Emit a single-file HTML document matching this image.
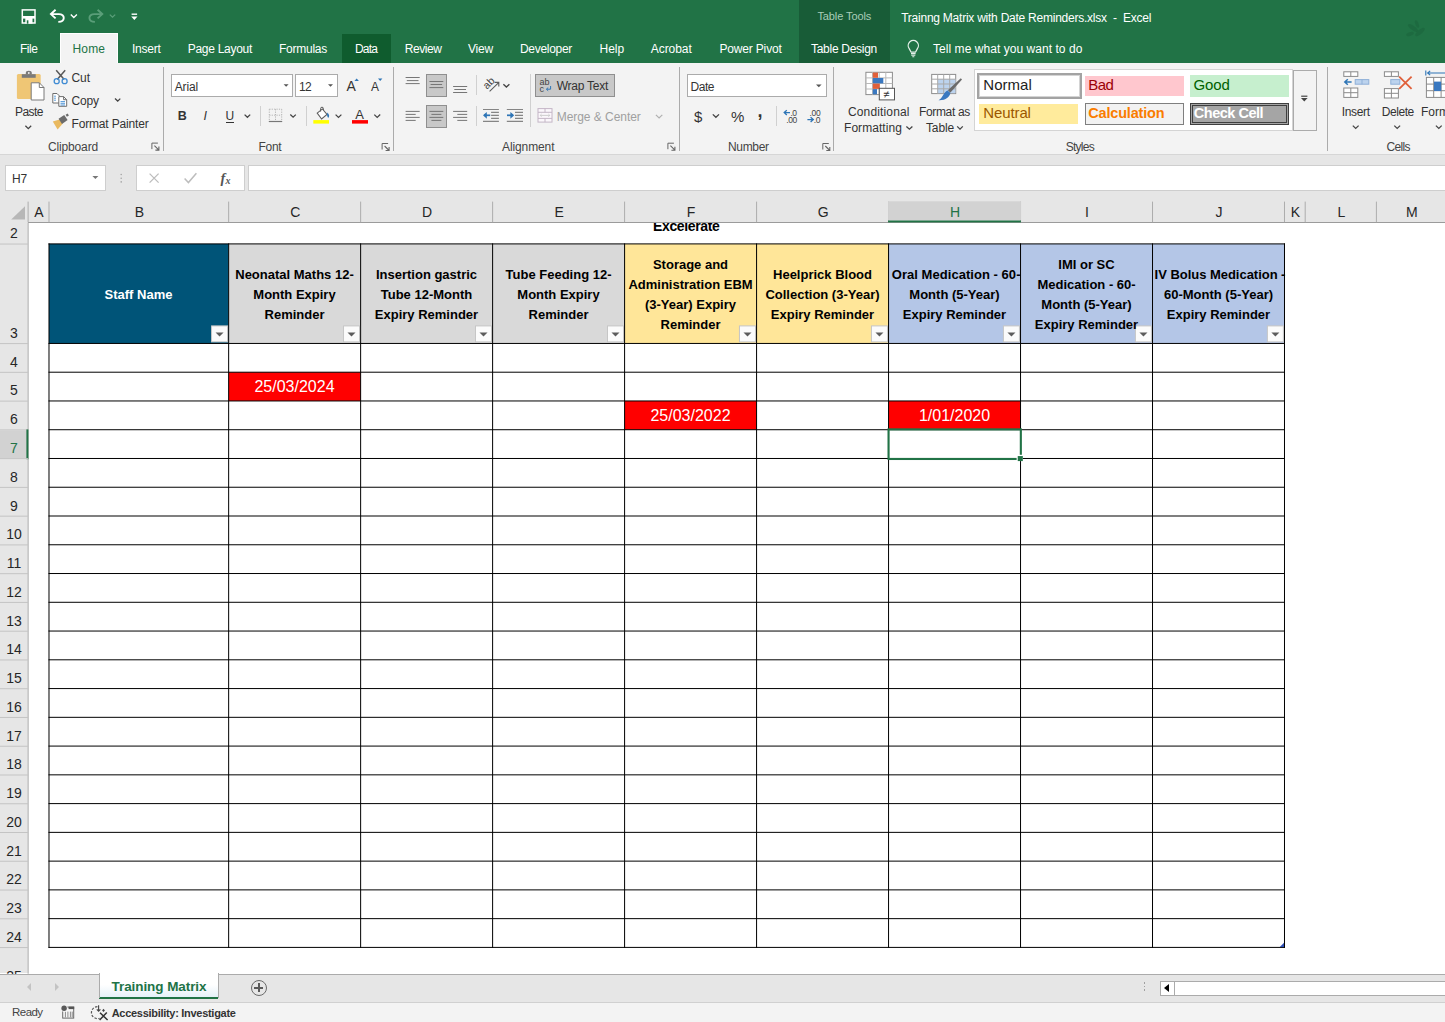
<!DOCTYPE html>
<html><head><meta charset="utf-8"><title>Trainng Matrix with Date Reminders.xlsx - Excel</title>
<style>
html,body{margin:0;padding:0;}
body{width:1445px;height:1022px;overflow:hidden;position:relative;background:#fff;font-family:'Liberation Sans', sans-serif;}
body>div,body>svg{position:absolute;}
</style></head><body>
<div style="left:0px;top:0px;width:1445px;height:63px;background:#217346;"></div>
<div style="left:799px;top:0px;width:91px;height:63px;background:#185c37;"></div>
<div style="left:342px;top:34px;width:49px;height:29px;background:#0f5c2e;"></div>
<div style="left:60px;top:33px;width:58px;height:31px;background:#f3f3f3;border:1px solid #fff;border-bottom:none;box-sizing:border-box;"></div>
<div style="left:0px;top:63px;width:60px;height:1px;background:#fbfbfb;"></div>
<div style="left:118px;top:63px;width:1327px;height:1px;background:#fbfbfb;"></div>
<div style="top:37.1px;height:24px;line-height:24px;font-size:12px;color:#ffffff;white-space:pre;left:20.0px;letter-spacing:-0.48px;">File</div>
<div style="top:37.1px;height:24px;line-height:24px;font-size:12px;color:#217346;white-space:pre;left:72.5px;letter-spacing:0.17px;">Home</div>
<div style="top:37.1px;height:24px;line-height:24px;font-size:12px;color:#ffffff;white-space:pre;left:132.0px;letter-spacing:-0.25px;">Insert</div>
<div style="top:37.1px;height:24px;line-height:24px;font-size:12px;color:#ffffff;white-space:pre;left:187.7px;letter-spacing:-0.28px;">Page Layout</div>
<div style="top:37.1px;height:24px;line-height:24px;font-size:12px;color:#ffffff;white-space:pre;left:279.0px;letter-spacing:-0.25px;">Formulas</div>
<div style="top:37.1px;height:24px;line-height:24px;font-size:12px;color:#ffffff;white-space:pre;left:355.0px;letter-spacing:-0.84px;">Data</div>
<div style="top:37.1px;height:24px;line-height:24px;font-size:12px;color:#ffffff;white-space:pre;left:404.7px;letter-spacing:-0.42px;">Review</div>
<div style="top:37.1px;height:24px;line-height:24px;font-size:12px;color:#ffffff;white-space:pre;left:468.0px;letter-spacing:-0.20px;">View</div>
<div style="top:37.1px;height:24px;line-height:24px;font-size:12px;color:#ffffff;white-space:pre;left:520.0px;letter-spacing:-0.30px;">Developer</div>
<div style="top:37.1px;height:24px;line-height:24px;font-size:12px;color:#ffffff;white-space:pre;left:599.5px;letter-spacing:-0.04px;">Help</div>
<div style="top:37.1px;height:24px;line-height:24px;font-size:12px;color:#ffffff;white-space:pre;left:650.8px;letter-spacing:-0.07px;">Acrobat</div>
<div style="top:37.1px;height:24px;line-height:24px;font-size:12px;color:#ffffff;white-space:pre;left:719.4px;letter-spacing:-0.16px;">Power Pivot</div>
<div style="top:37.1px;height:24px;line-height:24px;font-size:12px;color:#ffffff;white-space:pre;left:811.0px;letter-spacing:-0.28px;">Table Design</div>
<div style="top:37.1px;height:24px;line-height:24px;font-size:12px;color:#ffffff;white-space:pre;left:933.0px;letter-spacing:0.05px;">Tell me what you want to do</div>
<div style="top:4.7px;height:22px;line-height:22px;font-size:11px;color:#a9cdb8;white-space:pre;left:817.4px;letter-spacing:-0.09px;">Table Tools</div>
<div style="top:6.2px;height:24px;line-height:24px;font-size:12px;color:#ffffff;white-space:pre;left:901.2px;letter-spacing:-0.24px;">Trainng Matrix with Date Reminders.xlsx  -  Excel</div>
<div style="left:0px;top:63px;width:1445px;height:91px;background:#f3f3f3;"></div>
<div style="left:0px;top:154px;width:1445px;height:1px;background:#d6d6d6;"></div>
<div style="left:0px;top:155px;width:1445px;height:46px;background:#e6e6e6;"></div>
<div style="left:163px;top:67px;width:1px;height:84px;background:#ababab;"></div>
<div style="left:393px;top:67px;width:1px;height:84px;background:#ababab;"></div>
<div style="left:679px;top:67px;width:1px;height:84px;background:#ababab;"></div>
<div style="left:833px;top:67px;width:1px;height:84px;background:#ababab;"></div>
<div style="left:1327px;top:67px;width:1px;height:84px;background:#ababab;"></div>
<div style="top:135.1px;height:24px;line-height:24px;font-size:12px;color:#444444;white-space:pre;left:48.0px;letter-spacing:-0.15px;">Clipboard</div>
<div style="top:135.1px;height:24px;line-height:24px;font-size:12px;color:#444444;white-space:pre;left:258.5px;letter-spacing:-0.28px;">Font</div>
<div style="top:135.1px;height:24px;line-height:24px;font-size:12px;color:#444444;white-space:pre;left:502.0px;letter-spacing:-0.11px;">Alignment</div>
<div style="top:135.1px;height:24px;line-height:24px;font-size:12px;color:#444444;white-space:pre;left:728.0px;letter-spacing:-0.33px;">Number</div>
<div style="top:135.1px;height:24px;line-height:24px;font-size:12px;color:#444444;white-space:pre;left:1065.7px;letter-spacing:-0.73px;">Styles</div>
<div style="top:135.1px;height:24px;line-height:24px;font-size:12px;color:#444444;white-space:pre;left:1386.4px;letter-spacing:-0.67px;">Cells</div>
<div style="top:100.2px;height:24px;line-height:24px;font-size:12px;color:#333333;white-space:pre;left:15.0px;letter-spacing:-0.54px;">Paste</div>
<div style="top:66.2px;height:24px;line-height:24px;font-size:12px;color:#333333;white-space:pre;left:71.5px;letter-spacing:-0.06px;">Cut</div>
<div style="top:89.4px;height:24px;line-height:24px;font-size:12px;color:#333333;white-space:pre;left:71.5px;letter-spacing:-0.13px;">Copy</div>
<div style="top:112.2px;height:24px;line-height:24px;font-size:12px;color:#333333;white-space:pre;left:71.5px;letter-spacing:-0.16px;">Format Painter</div>
<div style="left:171px;top:74px;width:122px;height:22.5px;background:#fff;border:1px solid #ababab;box-sizing:border-box;"></div>
<div style="left:295px;top:74px;width:43px;height:22.5px;background:#fff;border:1px solid #ababab;box-sizing:border-box;"></div>
<div style="top:74.7px;height:24px;line-height:24px;font-size:12px;color:#333333;white-space:pre;left:174.7px;letter-spacing:-0.14px;">Arial</div>
<div style="top:74.7px;height:24px;line-height:24px;font-size:12px;color:#333333;white-space:pre;left:299.0px;letter-spacing:-0.67px;">12</div>
<div style="top:103.5px;height:25px;line-height:25px;font-size:12.5px;color:#333333;white-space:pre;font-weight:bold;left:177.7px;letter-spacing:-1.20px;">B</div>
<div style="top:103.5px;height:25px;line-height:25px;font-size:12.5px;color:#333333;white-space:pre;font-style:italic;left:203.5px;letter-spacing:0.53px;">I</div>
<div style="top:103.7px;height:24px;line-height:24px;font-size:12px;color:#333333;white-space:pre;left:225.5px;letter-spacing:-0.37px;">U</div>
<div style="left:225.5px;top:121.5px;width:8.5px;height:1px;background:#333333;"></div>
<div style="top:101.7px;height:26px;line-height:26px;font-size:13px;color:#333333;white-space:pre;left:355.2px;letter-spacing:0.83px;">A</div>
<div style="top:72.2px;height:28px;line-height:28px;font-size:14px;color:#333333;white-space:pre;left:346.5px;letter-spacing:0.16px;">A</div>
<div style="top:75.2px;height:24px;line-height:24px;font-size:12px;color:#333333;white-space:pre;left:371.0px;letter-spacing:-0.00px;">A</div>
<div style="left:426px;top:74px;width:21px;height:23px;background:#c8c8c8;border:1px solid #8f8f8f;box-sizing:border-box;"></div>
<div style="left:426px;top:105px;width:21px;height:23px;background:#c8c8c8;border:1px solid #8f8f8f;box-sizing:border-box;"></div>
<div style="left:260px;top:106px;width:1px;height:20px;background:#d0d0d0;"></div>
<div style="left:305.5px;top:106px;width:1px;height:20px;background:#d0d0d0;"></div>
<div style="left:475.5px;top:106px;width:1px;height:20px;background:#d0d0d0;"></div>
<div style="left:776px;top:106px;width:1px;height:20px;background:#d0d0d0;"></div>
<div style="left:475.5px;top:75px;width:1px;height:20px;background:#d0d0d0;"></div>
<div style="left:530px;top:74px;width:1px;height:53px;background:#d0d0d0;"></div>
<div style="left:535px;top:74px;width:80px;height:23px;background:#c8c8c8;border:1px solid #8f8f8f;box-sizing:border-box;"></div>
<div style="top:74.4px;height:24px;line-height:24px;font-size:12px;color:#333333;white-space:pre;left:556.7px;letter-spacing:-0.25px;">Wrap Text</div>
<div style="top:105.0px;height:24px;line-height:24px;font-size:12px;color:#a0a0a0;white-space:pre;left:556.7px;letter-spacing:-0.04px;">Merge &amp; Center</div>
<div style="left:687px;top:74px;width:139.5px;height:22.5px;background:#fff;border:1px solid #ababab;box-sizing:border-box;"></div>
<div style="top:74.7px;height:24px;line-height:24px;font-size:12px;color:#333333;white-space:pre;left:690.6px;letter-spacing:-0.51px;">Date</div>
<div style="top:101.7px;height:30px;line-height:30px;font-size:15px;color:#333333;white-space:pre;left:694.0px;letter-spacing:0.66px;">$</div>
<div style="top:101.7px;height:30px;line-height:30px;font-size:15px;color:#333333;white-space:pre;left:731.0px;letter-spacing:-0.54px;">%</div>
<div style="top:93.3px;height:36px;line-height:36px;font-size:18px;color:#333333;white-space:pre;font-weight:bold;left:757.5px;letter-spacing:0.50px;">,</div>
<div style="top:99.9px;height:24px;line-height:24px;font-size:12px;color:#333333;white-space:pre;left:848.0px;letter-spacing:0.14px;">Conditional</div>
<div style="top:115.9px;height:24px;line-height:24px;font-size:12px;color:#333333;white-space:pre;left:844.0px;letter-spacing:0.06px;">Formatting</div>
<div style="top:99.9px;height:24px;line-height:24px;font-size:12px;color:#333333;white-space:pre;left:918.9px;letter-spacing:-0.32px;">Format as</div>
<div style="top:115.9px;height:24px;line-height:24px;font-size:12px;color:#333333;white-space:pre;left:926.0px;letter-spacing:-0.14px;">Table</div>
<div style="left:974px;top:69px;width:319px;height:62px;background:#fff;border:1px solid #d4d4d4;box-sizing:border-box;"></div>
<div style="left:976.5px;top:72.5px;width:105px;height:26.5px;background:#fff;border:2px solid #a3a3a3;box-shadow:inset 0 0 0 1px #d4d4d4;box-sizing:border-box;"></div>
<div style="top:70.4px;height:30px;line-height:30px;font-size:15px;color:#222;white-space:pre;left:983.3px;letter-spacing:0.03px;">Normal</div>
<div style="left:1084.7px;top:75.7px;width:99px;height:20.6px;background:#ffc7ce;"></div>
<div style="top:70.4px;height:30px;line-height:30px;font-size:15px;color:#9c0006;white-space:pre;left:1088.3px;letter-spacing:-0.60px;">Bad</div>
<div style="left:1189.6px;top:75px;width:99px;height:21.5px;background:#c6efce;"></div>
<div style="top:70.4px;height:30px;line-height:30px;font-size:15px;color:#006100;white-space:pre;left:1193.4px;letter-spacing:-0.10px;">Good</div>
<div style="left:979.3px;top:103.7px;width:99px;height:20.3px;background:#ffeb9c;"></div>
<div style="top:98.3px;height:30px;line-height:30px;font-size:15px;color:#9c5700;white-space:pre;left:983.3px;letter-spacing:-0.12px;">Neutral</div>
<div style="left:1084.7px;top:103px;width:99px;height:21.6px;background:#f2f2f2;border:1px solid #7f7f7f;box-sizing:border-box;"></div>
<div style="top:98.8px;height:29px;line-height:29px;font-size:14.5px;color:#fa7d00;white-space:pre;font-weight:bold;left:1088.3px;letter-spacing:-0.19px;">Calculation</div>
<div style="left:1189.6px;top:103.2px;width:99px;height:21.4px;background:#a5a5a5;border:3px double #3f3f3f;box-sizing:border-box;"></div>
<div style="top:98.8px;height:29px;line-height:29px;font-size:14.5px;color:#fff;white-space:pre;font-weight:bold;left:1193.8px;letter-spacing:-0.49px;">Check Cell</div>
<div style="left:1293px;top:69.5px;width:23.5px;height:61px;background:#f3f3f3;border:1px solid #ababab;box-sizing:border-box;"></div>
<div style="top:99.9px;height:24px;line-height:24px;font-size:12px;color:#333333;white-space:pre;left:1341.8px;letter-spacing:-0.34px;">Insert</div>
<div style="top:99.9px;height:24px;line-height:24px;font-size:12px;color:#333333;white-space:pre;left:1381.7px;letter-spacing:-0.43px;">Delete</div>
<div style="top:99.9px;height:24px;line-height:24px;font-size:12px;color:#333333;white-space:pre;left:1421.0px;letter-spacing:-0.00px;">Format</div>
<div style="left:5px;top:165px;width:101px;height:26px;background:#fff;border:1px solid #cecece;box-sizing:border-box;"></div>
<div style="left:136px;top:165px;width:109px;height:26px;background:#fff;border:1px solid #cecece;box-sizing:border-box;"></div>
<div style="left:248px;top:165px;width:1200px;height:26px;background:#fff;border:1px solid #cecece;box-sizing:border-box;"></div>
<div style="top:167.2px;height:24px;line-height:24px;font-size:12px;color:#333333;white-space:pre;left:12.0px;letter-spacing:-0.17px;">H7</div>
<div style="left:0px;top:201px;width:1445px;height:772px;background:#fff;"></div>
<div style="top:212.0px;height:28px;line-height:28px;font-size:14px;color:#000;white-space:pre;font-weight:bold;left:653.0px;letter-spacing:-0.35px;">Excelerate</div>
<div style="left:0px;top:201px;width:1445px;height:21px;background:#e6e6e6;"></div>
<div style="left:0px;top:222px;width:1445px;height:1px;background:#9b9b9b;"></div>
<div style="left:0px;top:222px;width:28px;height:751px;background:#e6e6e6;"></div>
<svg width="1445" height="780" viewBox="0 200 1445 780" style="left:0;top:200px"><rect x="27.60" y="201.60" width="1.00" height="20.60" fill="#adadad"/><rect x="48.49" y="201.60" width="1.00" height="20.60" fill="#adadad"/><rect x="228.15" y="201.60" width="1.00" height="20.60" fill="#adadad"/><rect x="360.13" y="201.60" width="1.00" height="20.60" fill="#adadad"/><rect x="492.11" y="201.60" width="1.00" height="20.60" fill="#adadad"/><rect x="624.09" y="201.60" width="1.00" height="20.60" fill="#adadad"/><rect x="756.07" y="201.60" width="1.00" height="20.60" fill="#adadad"/><rect x="888.05" y="201.60" width="1.00" height="20.60" fill="#adadad"/><rect x="1020.03" y="201.60" width="1.00" height="20.60" fill="#adadad"/><rect x="1152.01" y="201.60" width="1.00" height="20.60" fill="#adadad"/><rect x="1283.99" y="201.60" width="1.00" height="20.60" fill="#adadad"/><rect x="1304.70" y="201.60" width="1.00" height="20.60" fill="#adadad"/><rect x="1375.90" y="201.60" width="1.00" height="20.60" fill="#adadad"/><rect x="888.05" y="201.30" width="132.88" height="19.20" fill="#d2d2d2"/><rect x="888.05" y="220.50" width="132.88" height="1.90" fill="#217346"/><rect x="27.50" y="222.70" width="1.30" height="751.00" fill="#bcbcbc"/><rect x="0.00" y="243.55" width="28.10" height="1.00" fill="#c4c4c4"/><rect x="0.00" y="343.09" width="28.10" height="1.00" fill="#c4c4c4"/><rect x="0.00" y="371.85" width="28.10" height="1.00" fill="#c4c4c4"/><rect x="0.00" y="400.61" width="28.10" height="1.00" fill="#c4c4c4"/><rect x="0.00" y="429.37" width="28.10" height="1.00" fill="#c4c4c4"/><rect x="0.00" y="430.32" width="27.60" height="28.16" fill="#d2d2d2"/><rect x="26.40" y="429.42" width="2.00" height="29.76" fill="#217346"/><rect x="0.00" y="458.13" width="28.10" height="1.00" fill="#c4c4c4"/><rect x="0.00" y="486.89" width="28.10" height="1.00" fill="#c4c4c4"/><rect x="0.00" y="515.65" width="28.10" height="1.00" fill="#c4c4c4"/><rect x="0.00" y="544.41" width="28.10" height="1.00" fill="#c4c4c4"/><rect x="0.00" y="573.17" width="28.10" height="1.00" fill="#c4c4c4"/><rect x="0.00" y="601.93" width="28.10" height="1.00" fill="#c4c4c4"/><rect x="0.00" y="630.69" width="28.10" height="1.00" fill="#c4c4c4"/><rect x="0.00" y="659.45" width="28.10" height="1.00" fill="#c4c4c4"/><rect x="0.00" y="688.21" width="28.10" height="1.00" fill="#c4c4c4"/><rect x="0.00" y="716.97" width="28.10" height="1.00" fill="#c4c4c4"/><rect x="0.00" y="745.73" width="28.10" height="1.00" fill="#c4c4c4"/><rect x="0.00" y="774.49" width="28.10" height="1.00" fill="#c4c4c4"/><rect x="0.00" y="803.25" width="28.10" height="1.00" fill="#c4c4c4"/><rect x="0.00" y="832.01" width="28.10" height="1.00" fill="#c4c4c4"/><rect x="0.00" y="860.77" width="28.10" height="1.00" fill="#c4c4c4"/><rect x="0.00" y="889.53" width="28.10" height="1.00" fill="#c4c4c4"/><rect x="0.00" y="918.29" width="28.10" height="1.00" fill="#c4c4c4"/><rect x="0.00" y="947.05" width="28.10" height="1.00" fill="#c4c4c4"/><rect x="48.99" y="243.90" width="179.66" height="99.54" fill="#005478"/><rect x="228.65" y="243.90" width="131.98" height="99.54" fill="#d9d9d9"/><rect x="360.63" y="243.90" width="131.98" height="99.54" fill="#d9d9d9"/><rect x="492.61" y="243.90" width="131.98" height="99.54" fill="#d9d9d9"/><rect x="624.59" y="243.90" width="131.98" height="99.54" fill="#ffe699"/><rect x="756.57" y="243.90" width="131.98" height="99.54" fill="#ffe699"/><rect x="888.55" y="243.90" width="131.98" height="99.54" fill="#b4c6e7"/><rect x="1020.53" y="243.90" width="131.98" height="99.54" fill="#b4c6e7"/><rect x="1152.51" y="243.90" width="131.98" height="99.54" fill="#b4c6e7"/><rect x="228.65" y="372.20" width="131.98" height="28.76" fill="#ff0000"/><rect x="624.59" y="400.96" width="131.98" height="28.76" fill="#ff0000"/><rect x="888.55" y="400.96" width="131.98" height="28.76" fill="#ff0000"/><rect x="48.49" y="243.40" width="1236.50" height="1.00" fill="#000"/><rect x="48.49" y="342.94" width="1236.50" height="1.00" fill="#000"/><rect x="48.49" y="371.70" width="1236.50" height="1.00" fill="#000"/><rect x="48.49" y="400.46" width="1236.50" height="1.00" fill="#000"/><rect x="48.49" y="429.22" width="1236.50" height="1.00" fill="#000"/><rect x="48.49" y="457.98" width="1236.50" height="1.00" fill="#000"/><rect x="48.49" y="486.74" width="1236.50" height="1.00" fill="#000"/><rect x="48.49" y="515.50" width="1236.50" height="1.00" fill="#000"/><rect x="48.49" y="544.26" width="1236.50" height="1.00" fill="#000"/><rect x="48.49" y="573.02" width="1236.50" height="1.00" fill="#000"/><rect x="48.49" y="601.78" width="1236.50" height="1.00" fill="#000"/><rect x="48.49" y="630.54" width="1236.50" height="1.00" fill="#000"/><rect x="48.49" y="659.30" width="1236.50" height="1.00" fill="#000"/><rect x="48.49" y="688.06" width="1236.50" height="1.00" fill="#000"/><rect x="48.49" y="716.82" width="1236.50" height="1.00" fill="#000"/><rect x="48.49" y="745.58" width="1236.50" height="1.00" fill="#000"/><rect x="48.49" y="774.34" width="1236.50" height="1.00" fill="#000"/><rect x="48.49" y="803.10" width="1236.50" height="1.00" fill="#000"/><rect x="48.49" y="831.86" width="1236.50" height="1.00" fill="#000"/><rect x="48.49" y="860.62" width="1236.50" height="1.00" fill="#000"/><rect x="48.49" y="889.38" width="1236.50" height="1.00" fill="#000"/><rect x="48.49" y="918.14" width="1236.50" height="1.00" fill="#000"/><rect x="48.49" y="946.90" width="1236.50" height="1.00" fill="#000"/><rect x="48.49" y="243.40" width="1.00" height="704.50" fill="#000"/><rect x="228.15" y="243.40" width="1.00" height="704.50" fill="#000"/><rect x="360.13" y="243.40" width="1.00" height="704.50" fill="#000"/><rect x="492.11" y="243.40" width="1.00" height="704.50" fill="#000"/><rect x="624.09" y="243.40" width="1.00" height="704.50" fill="#000"/><rect x="756.07" y="243.40" width="1.00" height="704.50" fill="#000"/><rect x="888.05" y="243.40" width="1.00" height="704.50" fill="#000"/><rect x="1020.03" y="243.40" width="1.00" height="704.50" fill="#000"/><rect x="1152.01" y="243.40" width="1.00" height="704.50" fill="#000"/><rect x="1283.99" y="243.40" width="1.00" height="704.50" fill="#000"/><rect x="211.55" y="325.9" width="16" height="16" fill="#fbfbfb" stroke="#c6c6c6" stroke-width="1"/><path d="M215.55,332.5 h8 l-4,4 Z" fill="#5c5c5c"/><rect x="343.53" y="325.9" width="16" height="16" fill="#fbfbfb" stroke="#c6c6c6" stroke-width="1"/><path d="M347.53,332.5 h8 l-4,4 Z" fill="#5c5c5c"/><rect x="475.51" y="325.9" width="16" height="16" fill="#fbfbfb" stroke="#c6c6c6" stroke-width="1"/><path d="M479.51,332.5 h8 l-4,4 Z" fill="#5c5c5c"/><rect x="607.49" y="325.9" width="16" height="16" fill="#fbfbfb" stroke="#c6c6c6" stroke-width="1"/><path d="M611.49,332.5 h8 l-4,4 Z" fill="#5c5c5c"/><rect x="739.47" y="325.9" width="16" height="16" fill="#fbfbfb" stroke="#c6c6c6" stroke-width="1"/><path d="M743.47,332.5 h8 l-4,4 Z" fill="#5c5c5c"/><rect x="871.45" y="325.9" width="16" height="16" fill="#fbfbfb" stroke="#c6c6c6" stroke-width="1"/><path d="M875.45,332.5 h8 l-4,4 Z" fill="#5c5c5c"/><rect x="1003.43" y="325.9" width="16" height="16" fill="#fbfbfb" stroke="#c6c6c6" stroke-width="1"/><path d="M1007.43,332.5 h8 l-4,4 Z" fill="#5c5c5c"/><rect x="1135.41" y="325.9" width="16" height="16" fill="#fbfbfb" stroke="#c6c6c6" stroke-width="1"/><path d="M1139.41,332.5 h8 l-4,4 Z" fill="#5c5c5c"/><rect x="1267.39" y="325.9" width="16" height="16" fill="#fbfbfb" stroke="#c6c6c6" stroke-width="1"/><path d="M1271.39,332.5 h8 l-4,4 Z" fill="#5c5c5c"/><rect x="888.55" y="429.37" width="132.28" height="29.61" fill="none" stroke="#217346" stroke-width="2.1"/><rect x="1016.63" y="454.78" width="6.20" height="6.30" fill="#fff"/><rect x="1017.73" y="456.08" width="5.10" height="5.00" fill="#217346"/><path d="M1283.99,942.80 V946.90 H1279.79 Z" fill="#2f4fb5"/></svg>
<div style="top:219.2px;height:28px;line-height:28px;font-size:14px;color:#262626;white-space:pre;left:0.0px;width:28.0px;text-align:center;">2</div>
<div style="top:319.2px;height:28px;line-height:28px;font-size:14px;color:#262626;white-space:pre;left:0.0px;width:28.0px;text-align:center;">3</div>
<div style="top:348.2px;height:28px;line-height:28px;font-size:14px;color:#262626;white-space:pre;left:0.0px;width:28.0px;text-align:center;">4</div>
<div style="top:376.2px;height:28px;line-height:28px;font-size:14px;color:#262626;white-space:pre;left:0.0px;width:28.0px;text-align:center;">5</div>
<div style="top:405.2px;height:28px;line-height:28px;font-size:14px;color:#262626;white-space:pre;left:0.0px;width:28.0px;text-align:center;">6</div>
<div style="top:434.2px;height:28px;line-height:28px;font-size:14px;color:#217346;white-space:pre;left:0.0px;width:28.0px;text-align:center;">7</div>
<div style="top:463.2px;height:28px;line-height:28px;font-size:14px;color:#262626;white-space:pre;left:0.0px;width:28.0px;text-align:center;">8</div>
<div style="top:492.2px;height:28px;line-height:28px;font-size:14px;color:#262626;white-space:pre;left:0.0px;width:28.0px;text-align:center;">9</div>
<div style="top:520.2px;height:28px;line-height:28px;font-size:14px;color:#262626;white-space:pre;left:0.0px;width:28.0px;text-align:center;">10</div>
<div style="top:549.2px;height:28px;line-height:28px;font-size:14px;color:#262626;white-space:pre;left:0.0px;width:28.0px;text-align:center;">11</div>
<div style="top:578.2px;height:28px;line-height:28px;font-size:14px;color:#262626;white-space:pre;left:0.0px;width:28.0px;text-align:center;">12</div>
<div style="top:607.2px;height:28px;line-height:28px;font-size:14px;color:#262626;white-space:pre;left:0.0px;width:28.0px;text-align:center;">13</div>
<div style="top:635.2px;height:28px;line-height:28px;font-size:14px;color:#262626;white-space:pre;left:0.0px;width:28.0px;text-align:center;">14</div>
<div style="top:664.2px;height:28px;line-height:28px;font-size:14px;color:#262626;white-space:pre;left:0.0px;width:28.0px;text-align:center;">15</div>
<div style="top:693.2px;height:28px;line-height:28px;font-size:14px;color:#262626;white-space:pre;left:0.0px;width:28.0px;text-align:center;">16</div>
<div style="top:722.2px;height:28px;line-height:28px;font-size:14px;color:#262626;white-space:pre;left:0.0px;width:28.0px;text-align:center;">17</div>
<div style="top:750.2px;height:28px;line-height:28px;font-size:14px;color:#262626;white-space:pre;left:0.0px;width:28.0px;text-align:center;">18</div>
<div style="top:779.2px;height:28px;line-height:28px;font-size:14px;color:#262626;white-space:pre;left:0.0px;width:28.0px;text-align:center;">19</div>
<div style="top:808.2px;height:28px;line-height:28px;font-size:14px;color:#262626;white-space:pre;left:0.0px;width:28.0px;text-align:center;">20</div>
<div style="top:837.2px;height:28px;line-height:28px;font-size:14px;color:#262626;white-space:pre;left:0.0px;width:28.0px;text-align:center;">21</div>
<div style="top:865.2px;height:28px;line-height:28px;font-size:14px;color:#262626;white-space:pre;left:0.0px;width:28.0px;text-align:center;">22</div>
<div style="top:894.2px;height:28px;line-height:28px;font-size:14px;color:#262626;white-space:pre;left:0.0px;width:28.0px;text-align:center;">23</div>
<div style="top:923.2px;height:28px;line-height:28px;font-size:14px;color:#262626;white-space:pre;left:0.0px;width:28.0px;text-align:center;">24</div>
<div style="top:962.0px;height:28px;line-height:28px;font-size:14px;color:#262626;white-space:pre;left:0.0px;width:28.0px;text-align:center;">25</div>
<div style="top:198.3px;height:28px;line-height:28px;font-size:14px;color:#262626;white-space:pre;left:28.6px;width:20.9px;text-align:center;">A</div>
<div style="top:198.3px;height:28px;line-height:28px;font-size:14px;color:#262626;white-space:pre;left:49.5px;width:179.7px;text-align:center;">B</div>
<div style="top:198.3px;height:28px;line-height:28px;font-size:14px;color:#262626;white-space:pre;left:229.2px;width:132.0px;text-align:center;">C</div>
<div style="top:198.3px;height:28px;line-height:28px;font-size:14px;color:#262626;white-space:pre;left:361.1px;width:132.0px;text-align:center;">D</div>
<div style="top:198.3px;height:28px;line-height:28px;font-size:14px;color:#262626;white-space:pre;left:493.1px;width:132.0px;text-align:center;">E</div>
<div style="top:198.3px;height:28px;line-height:28px;font-size:14px;color:#262626;white-space:pre;left:625.1px;width:132.0px;text-align:center;">F</div>
<div style="top:198.3px;height:28px;line-height:28px;font-size:14px;color:#262626;white-space:pre;left:757.1px;width:132.0px;text-align:center;">G</div>
<div style="top:198.3px;height:28px;line-height:28px;font-size:14px;color:#217346;white-space:pre;left:889.0px;width:132.0px;text-align:center;">H</div>
<div style="top:198.3px;height:28px;line-height:28px;font-size:14px;color:#262626;white-space:pre;left:1021.0px;width:132.0px;text-align:center;">I</div>
<div style="top:198.3px;height:28px;line-height:28px;font-size:14px;color:#262626;white-space:pre;left:1153.0px;width:132.0px;text-align:center;">J</div>
<div style="top:198.3px;height:28px;line-height:28px;font-size:14px;color:#262626;white-space:pre;left:1285.0px;width:20.7px;text-align:center;">K</div>
<div style="top:198.3px;height:28px;line-height:28px;font-size:14px;color:#262626;white-space:pre;left:1305.7px;width:71.2px;text-align:center;">L</div>
<div style="top:198.3px;height:28px;line-height:28px;font-size:14px;color:#262626;white-space:pre;left:1376.9px;width:70.1px;text-align:center;">M</div>
<div style="top:281.5px;height:26px;line-height:26px;font-size:13px;color:#fff;white-space:pre;font-weight:bold;left:49.0px;width:179.0px;text-align:center;">Staff Name</div>
<div style="top:261.5px;height:26px;line-height:26px;font-size:13px;color:#000;white-space:pre;font-weight:bold;left:229.0px;width:131.0px;text-align:center;">Neonatal Maths 12-</div>
<div style="top:281.5px;height:26px;line-height:26px;font-size:13px;color:#000;white-space:pre;font-weight:bold;left:229.0px;width:131.0px;text-align:center;">Month Expiry</div>
<div style="top:301.5px;height:26px;line-height:26px;font-size:13px;color:#000;white-space:pre;font-weight:bold;left:229.0px;width:131.0px;text-align:center;">Reminder</div>
<div style="top:261.5px;height:26px;line-height:26px;font-size:13px;color:#000;white-space:pre;font-weight:bold;left:361.0px;width:131.0px;text-align:center;">Insertion gastric</div>
<div style="top:281.5px;height:26px;line-height:26px;font-size:13px;color:#000;white-space:pre;font-weight:bold;left:361.0px;width:131.0px;text-align:center;">Tube 12-Month</div>
<div style="top:301.5px;height:26px;line-height:26px;font-size:13px;color:#000;white-space:pre;font-weight:bold;left:361.0px;width:131.0px;text-align:center;">Expiry Reminder</div>
<div style="top:261.5px;height:26px;line-height:26px;font-size:13px;color:#000;white-space:pre;font-weight:bold;left:493.0px;width:131.0px;text-align:center;">Tube Feeding 12-</div>
<div style="top:281.5px;height:26px;line-height:26px;font-size:13px;color:#000;white-space:pre;font-weight:bold;left:493.0px;width:131.0px;text-align:center;">Month Expiry</div>
<div style="top:301.5px;height:26px;line-height:26px;font-size:13px;color:#000;white-space:pre;font-weight:bold;left:493.0px;width:131.0px;text-align:center;">Reminder</div>
<div style="top:251.5px;height:26px;line-height:26px;font-size:13px;color:#000;white-space:pre;font-weight:bold;left:625.0px;width:131.0px;text-align:center;">Storage and</div>
<div style="top:271.5px;height:26px;line-height:26px;font-size:13px;color:#000;white-space:pre;font-weight:bold;left:625.0px;width:131.0px;text-align:center;">Administration EBM</div>
<div style="top:291.5px;height:26px;line-height:26px;font-size:13px;color:#000;white-space:pre;font-weight:bold;left:625.0px;width:131.0px;text-align:center;">(3-Year) Expiry</div>
<div style="top:311.5px;height:26px;line-height:26px;font-size:13px;color:#000;white-space:pre;font-weight:bold;left:625.0px;width:131.0px;text-align:center;">Reminder</div>
<div style="top:261.5px;height:26px;line-height:26px;font-size:13px;color:#000;white-space:pre;font-weight:bold;left:757.0px;width:131.0px;text-align:center;">Heelprick Blood</div>
<div style="top:281.5px;height:26px;line-height:26px;font-size:13px;color:#000;white-space:pre;font-weight:bold;left:757.0px;width:131.0px;text-align:center;">Collection (3-Year)</div>
<div style="top:301.5px;height:26px;line-height:26px;font-size:13px;color:#000;white-space:pre;font-weight:bold;left:757.0px;width:131.0px;text-align:center;">Expiry Reminder</div>
<div style="top:261.5px;height:26px;line-height:26px;font-size:13px;color:#000;white-space:pre;font-weight:bold;left:891.8px;letter-spacing:0.04px;">Oral Medication - 60-</div>
<div style="top:281.5px;height:26px;line-height:26px;font-size:13px;color:#000;white-space:pre;font-weight:bold;left:889.0px;width:131.0px;text-align:center;">Month (5-Year)</div>
<div style="top:301.5px;height:26px;line-height:26px;font-size:13px;color:#000;white-space:pre;font-weight:bold;left:889.0px;width:131.0px;text-align:center;">Expiry Reminder</div>
<div style="top:251.5px;height:26px;line-height:26px;font-size:13px;color:#000;white-space:pre;font-weight:bold;left:1021.0px;width:131.0px;text-align:center;">IMI or SC</div>
<div style="top:271.5px;height:26px;line-height:26px;font-size:13px;color:#000;white-space:pre;font-weight:bold;left:1021.0px;width:131.0px;text-align:center;">Medication - 60-</div>
<div style="top:291.5px;height:26px;line-height:26px;font-size:13px;color:#000;white-space:pre;font-weight:bold;left:1021.0px;width:131.0px;text-align:center;">Month (5-Year)</div>
<div style="top:311.5px;height:26px;line-height:26px;font-size:13px;color:#000;white-space:pre;font-weight:bold;left:1021.0px;width:131.0px;text-align:center;">Expiry Reminder</div>
<div style="top:261.5px;height:26px;line-height:26px;font-size:13px;color:#000;white-space:pre;font-weight:bold;left:1154.6px;letter-spacing:-0.03px;">IV Bolus Medication -</div>
<div style="top:281.5px;height:26px;line-height:26px;font-size:13px;color:#000;white-space:pre;font-weight:bold;left:1153.0px;width:131.0px;text-align:center;">60-Month (5-Year)</div>
<div style="top:301.5px;height:26px;line-height:26px;font-size:13px;color:#000;white-space:pre;font-weight:bold;left:1153.0px;width:131.0px;text-align:center;">Expiry Reminder</div>
<div style="top:371.0px;height:32px;line-height:32px;font-size:16px;color:#fff;white-space:pre;left:229.0px;width:131.0px;text-align:center;">25/03/2024</div>
<div style="top:399.7px;height:32px;line-height:32px;font-size:16px;color:#fff;white-space:pre;left:625.0px;width:131.0px;text-align:center;">25/03/2022</div>
<div style="top:399.7px;height:32px;line-height:32px;font-size:16px;color:#fff;white-space:pre;left:889.0px;width:131.0px;text-align:center;">1/01/2020</div>
<div style="left:0px;top:974px;width:1445px;height:28px;background:#e6e6e6;"></div>
<div style="left:0px;top:973.5px;width:1445px;height:1px;background:#ababab;"></div>
<div style="left:99px;top:974px;width:119px;height:24px;background:linear-gradient(#fff 45%,#e3f0f8);"></div>
<div style="left:99px;top:996.5px;width:119px;height:2px;background:#217346;"></div>
<div style="left:99px;top:973px;width:1px;height:25px;background:#ababab;"></div>
<div style="left:218px;top:973px;width:1px;height:25px;background:#ababab;"></div>
<div style="top:973.4px;height:27px;line-height:27px;font-size:13.5px;color:#217346;white-space:pre;font-weight:bold;left:111.6px;letter-spacing:-0.08px;">Training Matrix</div>
<div style="left:27px;top:983px;width:0;height:0;border-top:4px solid transparent;border-bottom:4px solid transparent;border-right:4px solid #c3c3c3;"></div>
<div style="left:55px;top:983px;width:0;height:0;border-top:4px solid transparent;border-bottom:4px solid transparent;border-left:4px solid #c3c3c3;"></div>
<div style="left:250.5px;top:979.5px;width:16.5px;height:16.5px;border:1.3px solid #6a6a6a;border-radius:50%;box-sizing:border-box;"></div>
<div style="left:254.3px;top:987px;width:9px;height:1.6px;background:#5a5a5a;"></div>
<div style="left:258px;top:983.3px;width:1.6px;height:9px;background:#5a5a5a;"></div>
<div style="left:1143.5px;top:982px;width:1.5px;height:1.5px;background:#a0a0a0;"></div>
<div style="left:1143.5px;top:985.5px;width:1.5px;height:1.5px;background:#a0a0a0;"></div>
<div style="left:1143.5px;top:989px;width:1.5px;height:1.5px;background:#a0a0a0;"></div>
<div style="left:1159.5px;top:981px;width:300px;height:14.5px;background:#fff;border:1px solid #ababab;box-sizing:border-box;"></div>
<div style="left:1174px;top:981px;width:1px;height:14.5px;background:#ababab;"></div>
<div style="left:1163.5px;top:984px;width:0;height:0;border-top:4.5px solid transparent;border-bottom:4.5px solid transparent;border-right:5px solid #000;"></div>
<div style="left:0px;top:1002px;width:1445px;height:20px;background:#f3f3f3;"></div>
<div style="left:0px;top:1002px;width:1445px;height:1px;background:#d0d0d0;"></div>
<div style="top:1001.0px;height:23px;line-height:23px;font-size:11.5px;color:#444;white-space:pre;left:12.0px;letter-spacing:-0.53px;">Ready</div>
<div style="top:1001.5px;height:22px;line-height:22px;font-size:11px;color:#333;white-space:pre;font-weight:bold;left:111.7px;letter-spacing:-0.29px;">Accessibility: Investigate</div>
<svg width="1445" height="1022" viewBox="0 0 1445 1022" style="left:0;top:0;pointer-events:none">
<rect x="22.3" y="9.9" width="12.7" height="13.1" fill="none" stroke="#fff" stroke-width="1.5"/>
<rect x="22.3" y="16" width="12.7" height="2.6" fill="#fff"/>
<rect x="25.3" y="18" width="7.2" height="5.6" fill="#fff"/>
<rect x="26.8" y="20.3" width="1.6" height="3.4" fill="#217346"/>
<path d="M55.6,9.8 L50.9,14.1 L55.6,18.4 M51.2,14.1 H58.8 C65.5,14.1 65.5,21.9 58.3,21.9" fill="none" stroke="#fff" stroke-width="1.9" stroke-linejoin="miter"/>
<path d="M70.8,14.6 L73.8,17.5 L76.9,14.6" fill="none" stroke="#fff" stroke-width="1.4"/>
<path d="M97.6,9.8 L102.3,14.1 L97.6,18.4 M102,14.1 H94.4 C87.7,14.1 87.7,21.9 94.9,21.9" fill="none" stroke="#5a9e79" stroke-width="1.9"/>
<path d="M109.8,14.6 L112.5,17.2 L115.2,14.6" fill="none" stroke="#5a9e79" stroke-width="1.3"/>
<rect x="131.6" y="13.5" width="5.5" height="1.4" fill="#fff"/>
<path d="M131.2,16.5 H137.5 L134.35,20 Z" fill="#fff"/>
<path d="M911,52 L909.2,48.6 A5.1,5.1 0 1 1 917.4,48.6 L915.6,52 Z" fill="none" stroke="#e4f0e9" stroke-width="1.25" stroke-linejoin="round"/>
<path d="M911,53.6 H915.6 M911.3,55.2 H915.3 M912.3,56.7 H914.3" stroke="#e4f0e9" stroke-width="1.1"/>
<g fill="#1c653d" opacity=".6" transform="translate(2,2)"><ellipse cx="1411" cy="26" rx="6" ry="2.2" transform="rotate(35 1411 26)"/><ellipse cx="1418" cy="30" rx="6" ry="2.2" transform="rotate(-40 1418 30)"/><ellipse cx="1408" cy="32" rx="4" ry="1.8" transform="rotate(-20 1408 32)"/><ellipse cx="1415" cy="22" rx="4" ry="1.6" transform="rotate(70 1415 22)"/></g>
<rect x="16.9" y="74" width="23.8" height="24.9" rx="1.5" fill="#efc675"/>
<rect x="21.8" y="74.2" width="13.9" height="3.6" fill="#7a7a7a"/>
<path d="M25.8,74.5 V73 a3,2.2 0 0 1 6,0 V74.5 Z" fill="#7a7a7a"/><circle cx="28.8" cy="73" r="0.9" fill="#f3f3f3"/>
<path d="M31.2,82.8 H39.3 L44,87.5 V100 H31.2 Z" fill="#fff" stroke="#7a7a7a" stroke-width="1"/>
<path d="M39.3,82.8 V87.5 H44" fill="none" stroke="#7a7a7a" stroke-width="1"/>
<path d="M25.4,125.8 L28.3,128.6 L31.2,125.8" fill="none" stroke="#444" stroke-width="1.3"/>
<path d="M56.2,70.2 L64.2,79.6 M65.2,70.2 L57.2,79.6" stroke="#595959" stroke-width="1.5" fill="none"/>
<circle cx="56.7" cy="81.2" r="2.5" fill="none" stroke="#3f8bd3" stroke-width="1.3"/><circle cx="64.6" cy="81.2" r="2.5" fill="none" stroke="#3f8bd3" stroke-width="1.3"/>
<path d="M52.8,93.5 H57 L59.5,96 V103 H52.8 Z" fill="#fff" stroke="#6e6e6e" stroke-width="1"/>
<path d="M54.2,96.2 H55.8 M54.2,98.2 H55.8 M54.2,100.2 H55.8" stroke="#3f8bd3" stroke-width="1"/>
<path d="M58.8,96.6 H63.6 L66.7,99.7 V106.3 H58.8 Z" fill="#fff" stroke="#6e6e6e" stroke-width="1"/>
<path d="M63.6,96.6 V99.7 H66.7" fill="none" stroke="#6e6e6e" stroke-width="1"/>
<path d="M60.5,101.6 H65 M60.5,103.3 H65 M60.5,105 H65" stroke="#3f8bd3" stroke-width=".9"/>
<path d="M115.0,98.6 L117.7,101.1 L120.3,98.6" fill="none" stroke="#444" stroke-width="1.3"/>
<path d="M52.8,121.6 L59.6,119.4 L62.6,123.8 L57.6,129.4 Z" fill="#e9b95f"/>
<path d="M58.6,118.8 L64.2,114.9 L67.6,120 L62,123.9 Z" fill="#6b6b6b"/>
<path d="M65.6,114.8 L67.6,113.4 L68.9,115.4 L66.9,116.8 Z" fill="#6b6b6b"/>
<path d="M151.9,149.1 V143.1 H157.9" fill="none" stroke="#666" stroke-width="1"/>
<path d="M154.4,145.6 L158.9,150.1 M158.9,146.6 V150.1 H155.4" fill="none" stroke="#666" stroke-width="1.1"/>
<path d="M283.6,84.3 L288.6,84.3 L286.1,86.8 Z" fill="#555"/>
<path d="M328.0,84.3 L333.0,84.3 L330.5,86.8 Z" fill="#555"/>
<path d="M354.4,81 L356.65,78.4 L358.9,81 Z" fill="#2e75b6"/>
<path d="M378,78.4 L382.4,78.4 L380.2,81 Z" fill="#2e75b6"/>
<path d="M244.6,114.6 L247.4,117.3 L250.2,114.6" fill="none" stroke="#444" stroke-width="1.3"/>
<path d="M269.3,109.2 H281.7 M269.3,115.2 H281.7 M269.3,109.2 V121 M275.5,109.2 V121 M281.7,109.2 V121" stroke="#b5b5b5" stroke-width="1" stroke-dasharray="1.2,1.2" fill="none"/>
<path d="M268.8,121.5 H282.2" stroke="#777" stroke-width="1.2"/>
<path d="M290.3,114.6 L293.1,117.2 L295.8,114.6" fill="none" stroke="#444" stroke-width="1.3"/>
<path d="M317.2,113.2 L322.4,108.9 L327,114.4 L321.6,119 Z" fill="#fff" stroke="#5e5e5e" stroke-width="1.1"/>
<path d="M320.6,111.6 V108.6 a1.4,1.4 0 0 1 2.8,0 V110" fill="none" stroke="#5e5e5e" stroke-width="1"/>
<path d="M327.2,112.6 C329.6,114.5 329.6,116.8 328.2,118 C327,116.6 326.8,115 327.2,112.6 Z" fill="#2e75b6"/>
<rect x="313.3" y="120.1" width="15.7" height="3.5" fill="#ffff00"/>
<path d="M335.6,114.6 L338.5,117.4 L341.4,114.6" fill="none" stroke="#444" stroke-width="1.3"/>
<rect x="352" y="120.1" width="16" height="3.5" fill="#ff0000"/>
<path d="M374.3,114.6 L377.2,117.4 L380.2,114.6" fill="none" stroke="#444" stroke-width="1.3"/>
<path d="M382.1,149.5 V143.5 H388.1" fill="none" stroke="#666" stroke-width="1"/>
<path d="M384.6,146 L389.1,150.5 M389.1,147 V150.5 H385.6" fill="none" stroke="#666" stroke-width="1.1"/>
<path d="M405.6,77.5 H419.7 M406.8,80.6 H418.5 M405.6,83.6 H419.7" stroke="#767676" stroke-width="1" fill="none"/>
<path d="M429.4,81.5 H443.3 M430.6,84.5 H442.1 M429.4,87.6 H443.3" stroke="#767676" stroke-width="1" fill="none"/>
<path d="M453.1,86.5 H467.2 M454.3,89.5 H466.0 M453.1,92.5 H467.2" stroke="#767676" stroke-width="1" fill="none"/>
<path d="M405.6,111.4 H419.7 M405.6,114.4 H415.7 M405.6,117.4 H419.7 M405.6,120.4 H415.7" stroke="#767676" stroke-width="1" fill="none"/>
<path d="M429.4,111.4 H443.3 M431.4,114.4 H441.4 M429.4,117.4 H443.3 M431.4,120.4 H441.4" stroke="#767676" stroke-width="1" fill="none"/>
<path d="M453.1,111.4 H467.2 M457.3,114.4 H467.2 M453.1,117.4 H467.2 M457.3,120.4 H467.2" stroke="#767676" stroke-width="1" fill="none"/>
<g transform="rotate(-45 488.6 83.6)"><text x="483.2" y="86.8" font-size="10.5" font-family="Liberation Sans, sans-serif" fill="#444">ab</text></g>
<path d="M489.6,91.4 L498.4,82.8 M494.6,82.4 H498.8 V86.6" stroke="#5c5c5c" stroke-width="1.1" fill="none"/>
<path d="M503.4,84.2 L506.4,87.0 L509.4,84.2" fill="none" stroke="#444" stroke-width="1.3"/>
<path d="M483.0,109.5 H498.9 M491.1,112.4 H498.9 M491.1,115.4 H498.9 M491.1,118.4 H498.9 M483.0,121.4 H498.9" stroke="#858585" stroke-width="1.1" fill="none"/>
<path d="M484.2,115.3 H490.2" stroke="#2e75b6" stroke-width="1.7" fill="none"/><path d="M483,115.3 L486.8,111.9 V118.7 Z" fill="#2e75b6"/>
<path d="M506.8,109.5 H523.0 M515.0,112.4 H523.0 M515.0,115.4 H523.0 M515.0,118.4 H523.0 M506.8,121.4 H523.0" stroke="#858585" stroke-width="1.1" fill="none"/>
<path d="M507,115.3 H513" stroke="#2e75b6" stroke-width="1.7" fill="none"/><path d="M514.2,115.3 L510.4,111.9 V118.7 Z" fill="#2e75b6"/>
<text x="539.6" y="84.6" font-size="9" font-family="Liberation Sans, sans-serif" fill="#444">ab</text>
<text x="539.6" y="92.4" font-size="9" font-family="Liberation Sans, sans-serif" fill="#444">c</text>
<path d="M550.6,86 V89.2 H546.6 M548.2,87.6 L546.4,89.2 L548.2,90.8" stroke="#2e75b6" stroke-width="1" fill="none"/>
<rect x="538" y="108.6" width="14" height="13.5" fill="#fbf7fb" stroke="#c4b6c6" stroke-width="1"/>
<path d="M538,112.3 H552 M538,118.4 H552 M545,108.6 V112.3 M545,118.4 V122.1" stroke="#c4b6c6" stroke-width="1" fill="none"/>
<path d="M540.2,115.4 H549.8 M541.6,114 L540.2,115.4 L541.6,116.8 M548.4,114 L549.8,115.4 L548.4,116.8" stroke="#c9c9c9" stroke-width=".9" fill="none"/>
<path d="M655.9,114.9 L659.1,117.9 L662.3,114.9" fill="none" stroke="#b0b0b0" stroke-width="1.2"/>
<path d="M667.9,149.2 V143.2 H673.9" fill="none" stroke="#666" stroke-width="1"/>
<path d="M670.4,145.7 L674.9,150.2 M674.9,146.7 V150.2 H671.4" fill="none" stroke="#666" stroke-width="1.1"/>
<path d="M816.0,84.4 L821.6,84.4 L818.8,87.2 Z" fill="#555"/>
<path d="M712.8,114.4 L715.9,117.3 L719.0,114.4" fill="none" stroke="#444" stroke-width="1.3"/>
<path d="M784.3,112.6 H790 M786.8,110.2 L784.2,112.6 L786.8,115" stroke="#2e75b6" stroke-width="1.3" fill="none"/>
<text x="790.4" y="115.8" font-size="8.5" font-family="Liberation Sans, sans-serif" fill="#444" letter-spacing="-.4">.0</text>
<text x="786.2" y="122.6" font-size="8.5" font-family="Liberation Sans, sans-serif" fill="#444" letter-spacing="-.4">.00</text>
<text x="809.6" y="115.8" font-size="8.5" font-family="Liberation Sans, sans-serif" fill="#444" letter-spacing="-.4">.00</text>
<path d="M807.4,119.6 H813.2 M810.6,117.2 L813.3,119.6 L810.6,122" stroke="#2e75b6" stroke-width="1.3" fill="none"/>
<text x="813.8" y="122.6" font-size="8.5" font-family="Liberation Sans, sans-serif" fill="#444" letter-spacing="-.4">.0</text>
<path d="M822.8,149.5 V143.5 H828.8" fill="none" stroke="#666" stroke-width="1"/>
<path d="M825.3,146 L829.8,150.5 M829.8,147 V150.5 H826.3" fill="none" stroke="#666" stroke-width="1.1"/>
<rect x="865.9" y="72.3" width="26.5" height="22.3" fill="#fff" stroke="#8c8c8c" stroke-width="1"/>
<path d="M865.9,77.9 H892.4 M865.9,83.5 H892.4 M865.9,89 H892.4 M872.5,72.3 V94.6 M879.2,72.3 V94.6 M885.8,72.3 V94.6" stroke="#b9b9b9" stroke-width="1" fill="none"/>
<rect x="872.8" y="72.6" width="5.2" height="5.2" fill="#e0603a"/><rect x="872.8" y="78" width="10.5" height="5.4" fill="#3a78c0"/><rect x="872.8" y="83.6" width="7" height="5.3" fill="#e0603a"/><rect x="872.8" y="89.1" width="4.2" height="5.2" fill="#3a78c0"/>
<rect x="879.3" y="88.3" width="15.2" height="11.6" fill="#fff" stroke="#555" stroke-width="1"/>
<text x="883.2" y="98.2" font-size="11" font-family="Liberation Sans, sans-serif" fill="#333">≠</text>
<path d="M906.4,126.4 L909.4,129.2 L912.4,126.4" fill="none" stroke="#444" stroke-width="1.3"/>
<rect x="931.7" y="74.4" width="24" height="19.2" fill="#fff" stroke="#8c8c8c" stroke-width="1"/>
<rect x="937.8" y="79.2" width="17.6" height="14" fill="#bcd3ee"/>
<path d="M931.7,79.2 H955.7 M931.7,84 H955.7 M931.7,88.8 H955.7 M937.7,74.4 V93.6 M943.7,74.4 V93.6 M949.7,74.4 V93.6" stroke="#a9a9a9" stroke-width="1" fill="none"/>
<path d="M960.8,78.2 L962,79.6 L950.5,92.4 L947.8,90.2 Z" fill="#6b6b6b"/>
<path d="M947.6,90.6 L950.4,93 C949.6,97 945.5,100.6 938.6,100.2 C942.6,98.6 943.4,92.2 947.6,90.6 Z" fill="#3a78c0"/>
<path d="M957.2,126.4 L960.0,129.1 L962.8,126.4" fill="none" stroke="#444" stroke-width="1.3"/>
<rect x="1301.2" y="95.6" width="6.2" height="1.2" fill="#444"/>
<path d="M1301,98 H1307.6 L1304.3,101.6 Z" fill="#444"/>
<rect x="1343.8" y="71.8" width="14" height="4.6" fill="#fff" stroke="#8a8a8a" stroke-width="1"/>
<path d="M1350.8,71.8 V76.39999999999999 " stroke="#8a8a8a" stroke-width="1" fill="none"/>
<rect x="1343.8" y="88" width="14" height="9.4" fill="#fff" stroke="#8a8a8a" stroke-width="1"/>
<path d="M1350.8,88 V97.4 M1343.8,92.7 H1357.8 " stroke="#8a8a8a" stroke-width="1" fill="none"/>
<rect x="1355.2" y="79.6" width="13.6" height="4.6" fill="#bcd3ee" stroke="#8fb0d8" stroke-width="1"/><path d="M1362,79.6 V84.2" stroke="#8fb0d8"/>
<path d="M1345,82 H1351.6 M1347.8,79.3 L1344.8,82 L1347.8,84.7" stroke="#2e75b6" stroke-width="1.5" fill="none"/>
<path d="M1352.8,125.6 L1355.7,128.4 L1358.6,125.6" fill="none" stroke="#444" stroke-width="1.3"/>
<rect x="1384.4" y="71.8" width="14" height="4.6" fill="#fff" stroke="#8a8a8a" stroke-width="1"/>
<path d="M1391.4,71.8 V76.39999999999999 " stroke="#8a8a8a" stroke-width="1" fill="none"/>
<rect x="1384.4" y="88.6" width="14" height="9.4" fill="#fff" stroke="#8a8a8a" stroke-width="1"/>
<path d="M1391.4,88.6 V98.0 M1384.4,93.3 H1398.4 " stroke="#8a8a8a" stroke-width="1" fill="none"/>
<rect x="1390.8" y="79.6" width="9" height="4.6" fill="#bcd3ee" stroke="#8fb0d8" stroke-width="1"/>
<path d="M1399.2,76.6 L1411.6,88.8 M1411.6,76.6 L1399.2,88.8" stroke="#e0603a" stroke-width="1.8" fill="none"/>
<path d="M1394.3,125.6 L1397.2,128.4 L1400.1,125.6" fill="none" stroke="#444" stroke-width="1.3"/>
<path d="M1427.6,73 H1446 M1425.8,70.6 V75.4 M1430.2,70.9 L1427.6,73 L1430.2,75.1" stroke="#2e75b6" stroke-width="1.1" fill="none"/>
<rect x="1426.4" y="77.4" width="22" height="20" fill="#fff" stroke="#8a8a8a" stroke-width="1"/>
<path d="M1433.7,77.4 V97.4 M1441.1,77.4 V97.4 M1426.4,84.1 H1448.4 M1426.4,90.7 H1448.4 " stroke="#8a8a8a" stroke-width="1" fill="none"/>
<rect x="1434" y="81.6" width="7.2" height="9.4" fill="#3a78c0"/>
<path d="M1435.9,125.6 L1438.8,128.4 L1441.7,125.6" fill="none" stroke="#444" stroke-width="1.3"/>
<path d="M92.4,176.0 L98.4,176.0 L95.4,179.0 Z" fill="#777"/>
<circle cx="121.2" cy="174.5" r=".8" fill="#a6a6a6"/><circle cx="121.2" cy="178.2" r=".8" fill="#a6a6a6"/><circle cx="121.2" cy="181.9" r=".8" fill="#a6a6a6"/>
<path d="M149.6,173.6 L158.6,182.6 M158.6,173.6 L149.6,182.6" stroke="#bdbdbd" stroke-width="1.3" fill="none"/>
<path d="M184.6,178.6 L188.4,182.6 L196.4,173.2" stroke="#bdbdbd" stroke-width="1.5" fill="none"/>
<text x="220.6" y="183.2" font-size="14.5" font-style="italic" font-weight="bold" font-family="Liberation Serif, serif" fill="#555">f</text><text x="225.6" y="184" font-size="10" font-style="italic" font-weight="bold" font-family="Liberation Serif, serif" fill="#555">x</text>
<path d="M25,206.2 V219.4 H11.2 Z" fill="#b7b7b7"/>
<rect x="62.7" y="1007.1" width="11" height="11" fill="#f6f6f6" stroke="#6a6a6a" stroke-width="1"/>
<rect x="68.6" y="1006.6" width="5.6" height="2.5" fill="#555"/>
<path d="M65.4,1011.6 V1017.4 M67.9,1011.6 V1017.4 M70.4,1011.6 V1017.4 M72.2,1011.6 V1017.4" stroke="#8a8a8a" stroke-width="1"/>
<circle cx="64.1" cy="1008.3" r="3.5" fill="#f3f3f3"/><circle cx="64.1" cy="1008.3" r="2.7" fill="#595959"/>
<path d="M97.4,1006.6 a6,6 0 1 0 2.2,11.6" fill="none" stroke="#555" stroke-width="1.2" stroke-dasharray="2.4,1.5"/>
<path d="M98.6,1005.2 V1011 M96.8,1009.4 L98.6,1011.2 L100.4,1009.4" stroke="#444" stroke-width="1.1" fill="none"/>
<path d="M103.5,1008.8 L104.9,1010.4 L103.5,1012 L102.1,1010.4 Z" fill="#444"/>
<path d="M100,1012.8 L107.6,1020 M106.8,1012.6 L99.6,1020" stroke="#333" stroke-width="1.5" fill="none"/>
</svg>
</body></html>
